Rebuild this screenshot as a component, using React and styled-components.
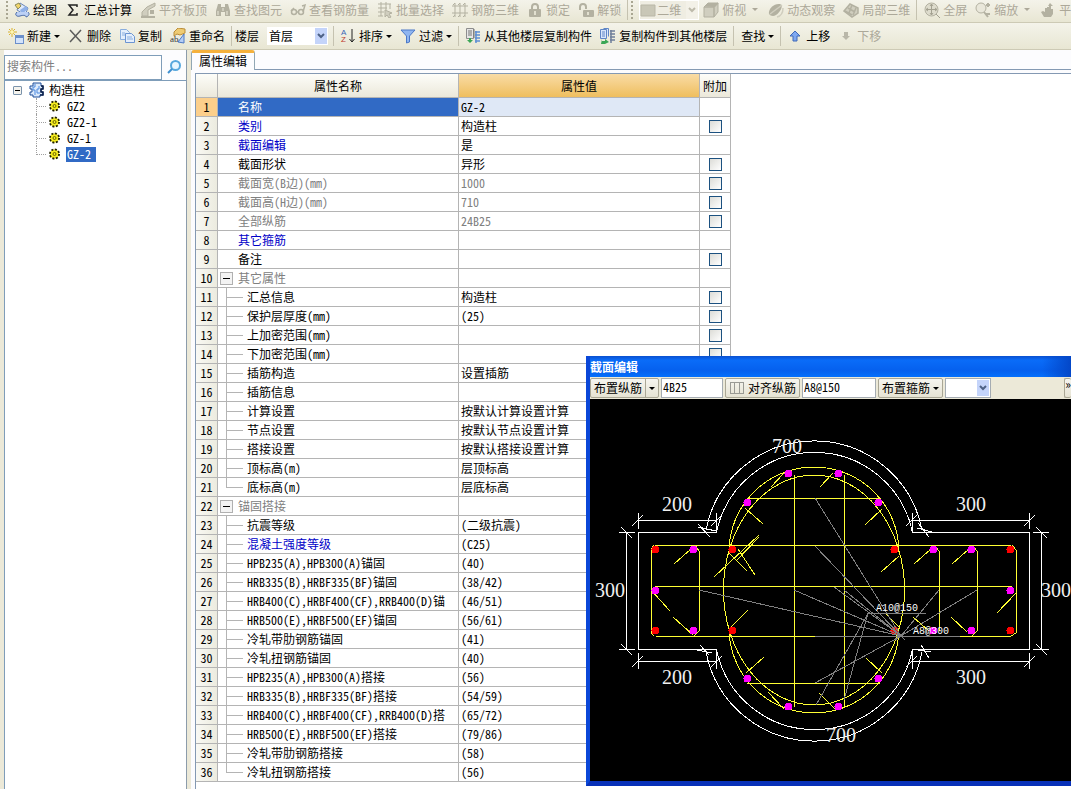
import React from "react";
import styled, { createGlobalStyle, css } from "styled-components";

const GlobalStyle = createGlobalStyle`
   * {
      box-sizing: border-box;
   }
   body {
      margin: 0;
      background: #ffffff;
      color: #000000;
      font-family: "Noto Sans CJK SC", sans-serif;
      font-size: 12px;
      line-height: 18px;
      font-feature-settings: "hwid";
   }
   button, input, select {
      font: inherit;
      font-feature-settings: inherit;
      color: inherit;
   }
`;

const Page = styled.div`
   display: flex;
   flex-direction: column;
   height: 100vh;
   overflow: hidden;
   white-space: nowrap;
`;

/* toolbars */

const Toolbar = styled.div`
   display: flex;
   align-items: center;
   flex: none;
   height: ${(props) => (props.$top ? 23 : 27)}px;
   padding-left: ${(props) => (props.$top ? 6 : 4)}px;
   padding-bottom: ${(props) => (props.$top ? 3 : 0)}px;
   overflow: hidden;
   background: linear-gradient(#f4f3ea, #e8e6d3);
   border-bottom: 1px solid #cdcab5;
`;

const ToolButton = styled.button`
   display: flex;
   align-items: center;
   flex: none;
   gap: 3px;
   height: 20px;
   padding: 0 4px;
   border: 0;
   background: none;
   &:disabled {
      color: #aca899;
   }
   &:hover:enabled {
      background: #f8f7f1;
   }
`;

const Separator = styled.span`
   flex: none;
   width: 1px;
   height: 20px;
   margin: 0 ${(props) => props.$after || 3}px 0 2px;
   background: #c5c2b0;
`;

const Grip = styled.span`
   flex: none;
   width: 2px;
   height: 18px;
   margin-right: ${(props) => props.$after || 2}px;
   background: repeating-linear-gradient(#a9a692 0 2px, transparent 2px 4px);
`;

const Arrow = styled.span`
   flex: none;
   margin: 0 ${(props) => (props.$wide ? 2 : 0)}px 0 ${(props) => (props.$wide ? 3 : 0)}px;
   border: 3px solid transparent;
   border-top-color: currentColor;
   border-bottom: 0;
`;

const FloorLabel = styled.label`
   display: flex;
   align-items: center;
   gap: 8px;
   margin-right: 3px;
   padding-left: 1px;
`;

const Combo = styled.span`
   display: flex;
   align-items: center;
   flex: none;
   width: ${(props) => props.$width}px;
   height: ${(props) => props.$height || 18}px;
   padding: 1px;
   border: ${(props) => (props.$border ? "1px solid #a5acb2" : "0")};
   background: ${(props) => (props.$flat ? "#efede2" : "#ffffff")};
   color: ${(props) => (props.$flat ? "#aca899" : "#000000")};
   outline: ${(props) => (props.$flat ? "1px solid #ffffff" : "none")};
   outline-offset: -1px;
`;

const ComboSelect = styled.select`
   appearance: none;
   flex: 1;
   min-width: 0;
   height: 16px;
   padding: 0 0 0 1px;
   border: 0;
   background: none;
   line-height: 16px;
   opacity: 1;
`;

const ComboArrow = styled.span`
   display: flex;
   align-items: center;
   justify-content: center;
   width: 12px;
   align-self: stretch;
   background: ${(props) => (props.$flat ? "#f3f1e8" : "#c4d4fa")};
   color: ${(props) => (props.$flat ? "#bdbaab" : "#4d6185")};
`;

/* left side */

const Body = styled.div`
   display: flex;
   flex: 1;
   min-height: 0;
   background: #ece9d8;
`;

const Sidebar = styled.aside`
   display: flex;
   flex-direction: column;
   flex: none;
   width: 183px;
   margin-left: 4px;
   border-right: 1px solid #8c9cab;
   background: #fcfcfe;
`;

const SearchRow = styled.form`
   display: flex;
   align-items: center;
   height: 30px;
   padding-top: 4px;
`;

const SearchInput = styled.input`
   width: 158px;
   height: 25px;
   padding: 0 2px 4px;
   border: 1px solid #7f9db9;
   background: #ffffff;
   &::placeholder {
      color: #808080;
      opacity: 1;
   }
`;

const SearchButton = styled.button`
   display: flex;
   justify-content: center;
   flex: 1;
   padding: 0;
   border: 0;
   background: none;
`;

const Tree = styled.ul`
   flex: 1;
   margin: 0;
   padding: 1px 0 0 8px;
   border-top: 1px solid #7f9db9;
   border-left: 1px solid #7f9db9;
   background: #ffffff;
   list-style: none;
   line-height: 16px;
`;

const TreeRoot = styled.div`
   display: flex;
   align-items: center;
   gap: 4px;
   height: 16px;
`;

const TreeToggle = styled.button`
   width: 9px;
   height: 9px;
   margin-right: 3px;
   padding: 0;
   border: 1px solid #7b93ab;
   border-radius: 1px;
   background: linear-gradient(#000000, #000000) center / 5px 1px no-repeat,
      #f4f3ee;
`;

const TreeList = styled.ul`
   margin: 0;
   padding: 0 0 0 23px;
   list-style: none;
`;

const TreeItem = styled.li`
   display: flex;
   align-items: center;
   height: 16px;
`;

const TreeLine = styled.span`
   width: 11px;
   height: ${(props) => (props.$last ? 9 : 16)}px;
   align-self: flex-start;
   border-left: 1px dotted #a0a0a0;
   background: repeating-linear-gradient(90deg, #a0a0a0 0 1px, #ffffff 1px 2px) 0
      8px / 12px 1px no-repeat;
`;

const TreeName = styled.span`
   height: 15px;
   margin-left: 3px;
   padding: 0 5px 0 1px;
   line-height: 14px;
   background: ${(props) => (props.$selected ? "#316ac5" : "none")};
   color: ${(props) => (props.$selected ? "#ffffff" : "#000000")};
`;

/* property table */

const Main = styled.main`
   display: flex;
   flex-direction: column;
   flex: 1;
   min-width: 0;
   margin-left: 4px;
   background: #fcfcfe;
`;

const TabStrip = styled.div`
   display: flex;
   flex: none;
   height: 20px;
   &::after {
      content: "";
      flex: 1;
      border-bottom: 1px solid #8499b3;
   }
`;

const Tab = styled.button`
   height: 20px;
   width: 64px;
   padding: 0 0 4px;
   border: 1px solid #91a7b4;
   border-top: 3px solid #f5b13c;
   border-bottom: 0;
   border-radius: 3px 3px 0 0;
   background: #fcfcfe;
   line-height: 15px;
`;

const TabBody = styled.div`
   flex: 1;
   min-height: 0;
   margin: 3px 0 0 4px;
   border-top: 1px solid #8499b3;
   border-left: 1px solid #8499b3;
   background: #ffffff;
   overflow: hidden;
`;

const Table = styled.table`
   table-layout: fixed;
   width: 535px;
   border-spacing: 0;
   line-height: 18px;
`;

const line = css`
   border-right: 1px solid #b4b4b4;
   border-bottom: 1px solid #b4b4b4;
`;

const HeadCell = styled.th`
   ${line}
   width: ${(props) => props.$width}px;
   height: 24px;
   padding: 0;
   font-weight: normal;
   background: ${(props) =>
      props.$active
         ? "linear-gradient(#f9dca6, #efbe5e)"
         : "linear-gradient(#fdfdf9, #ebe8da)"};
`;

const NumberCell = styled.th`
   ${line}
   height: 19px;
   padding: 0;
   font-weight: normal;
   background: ${(props) =>
      props.$active
         ? "#fccf8b"
         : "linear-gradient(90deg, #f9f9f4, #ecebdf)"};
`;

const tones = { blue: "#0000c8", gray: "#808080" };

const NameCell = styled.td`
   ${line}
   height: 19px;
   padding: 0 0 0 ${(props) => ({ group: 2, child: 8 }[props.$kind] || 20)}px;
   overflow: hidden;
   color: ${(props) => (props.$active ? "#ffffff" : tones[props.$tone])};
   background: ${(props) => (props.$active ? "#316ac5" : "#ffffff")};
`;

const NameFlow = styled.div`
   display: flex;
   align-items: center;
   height: 18px;
`;

const GroupToggle = styled.button`
   width: 13px;
   height: 13px;
   margin-right: 5px;
   padding: 0;
   border: 1px solid #b0b0b0;
   background: linear-gradient(#000000, #000000) center / 7px 1px no-repeat,
      #f3f3f3;
`;

const Branch = styled.span`
   width: 17px;
   height: 19px;
   margin: 0 4px -1px 0;
   background: linear-gradient(#b4b4b4, #b4b4b4) 0 0 / 1px
         ${(props) => (props.$last ? "9px" : "19px")} no-repeat,
      linear-gradient(#b4b4b4, #b4b4b4) 0 9px / 17px 1px no-repeat;
`;

const ValueCell = styled.td`
   ${line}
   height: 19px;
   padding: 0 0 0 2px;
   overflow: hidden;
   color: ${(props) => tones[props.$tone]};
   background: ${(props) => (props.$active ? "#dfe8f6" : "#ffffff")};
`;

const CheckCell = styled.td`
   ${line}
   height: 19px;
   padding: 0;
`;

const CheckBox = styled.input`
   appearance: none;
   display: block;
   width: 13px;
   height: 13px;
   margin: 0 auto;
   border: 1px solid #1c5180;
   background: linear-gradient(135deg, #dcdcd7, #ffffff);
   &:checked {
      background: #21a121;
   }
`;

/* section editor */

const Window = styled.section`
   position: absolute;
   left: 586px;
   right: 0;
   top: 356px;
   display: flex;
   flex-direction: column;
   overflow: hidden;
   border-left: 4px solid #0a47d8;
   border-bottom: 5px solid #0831b8;
   background: #000000;
   line-height: 18px;
`;

const TitleBar = styled.h2`
   height: 21px;
   margin: 0;
   font-size: 12px;
   line-height: 22px;
   color: #ffffff;
   background: linear-gradient(90deg, transparent 94%, #0347c8),
      linear-gradient(#0a50d0, #0a6cf8 20%, #0560ee 70%, #0470fc);
`;

const WindowBar = styled.div`
   display: flex;
   align-items: center;
   gap: 2px;
   height: 22px;
   background: #ece9d8;
`;

const WindowButton = styled.button`
   display: flex;
   align-items: center;
   flex: none;
   gap: 3px;
   height: 20px;
   padding: 0 3px;
   border: 1px solid #aaa795;
   border-radius: 2px;
   background: linear-gradient(#f6f5ef, #e6e3d3);
`;

const Divider = styled.span`
   width: 1px;
   height: 18px;
   background: #aaa795;
`;

const WindowInput = styled.input`
   flex: none;
   width: ${(props) => props.$width}px;
   height: 20px;
   padding: 0 1px 3px;
   border: 1px solid #a5acb2;
   background: #ffffff;
`;

const More = styled(WindowButton)`
   margin-left: auto;
   padding: 0 0 8px;
   border-right: 0;
   line-height: 12px;
`;

const Canvas = styled.svg`
   display: block;
   width: 481px;
   height: 382px;
   fill: none;
   shape-rendering: crispEdges;
`;

const Dimension = styled.text`
   font-family: "Liberation Serif", serif;
   font-size: 20px;
   fill: #f0f0f0;
`;

const Note = styled.text`
   font-family: "Liberation Mono", monospace;
   font-size: 10px;
   fill: #ffffff;
`;

const Glyph = styled.svg`
   display: block;
   flex: none;
   width: 16px;
   height: 16px;
   fill: none;
`;

const G = "#b3b1a1";
const L = "#d0cebf";

const drawings = {
   draw: (
      <>
         <path d="M6 1l8 5-3 7-8-5z" fill="#dfe9fa" stroke="#6a86b8" />
         <path d="M1 3l4-2 2 3-3 3z" fill="#f2d56a" stroke="#8b8a5a" />
         <path d="M6 8l6-4 2 3-6 5z" fill="#8fb0e8" />
         <path d="M3 10c-3 3 0 5 3 4s6-1 6 1c3-1 4-3 2-5" stroke="#4a6aa5" fill="#bcd0f5" />
      </>
   ),
   sum: <path d="M12 5V3H4l4 5-4 5h8v-2" stroke="#222222" strokeWidth="1.5" />,
   slab: (
      <>
         <path d="M2 10l5-5 8-4v3L8 8v6H2z" fill={L} stroke={G} />
         <path d="M1 14h14v2H1zM10 8h4v4h-4z" fill={G} />
      </>
   ),
   find: (
      <>
         <path d="M3 2h3v3h4V2h3l2 7v5h-5v-4H6v4H1V9z" fill={G} />
         <path d="M3 9v4M12 9v4M8 6v3" stroke="#ecebdc" />
      </>
   ),
   glasses: (
      <>
         <circle cx="4" cy="10" r="2.5" stroke={G} strokeWidth="1.5" />
         <circle cx="11" cy="10" r="2.5" stroke={G} strokeWidth="1.5" />
         <path d="M1 9l3-3M6 10h3M13 10l2-7-3 1" stroke={G} strokeWidth="1.5" />
      </>
   ),
   batch: (
      <>
         <path d="M1 2h13M1 6h9M1 10h6M4 0v14M9 0v8M13 2v5M1 14h5" stroke={G} />
         <path d="M8 8l7 3-3 1 2 3-2 1-2-3-2 2z" fill={L} stroke={G} />
      </>
   ),
   mesh: (
      <path d="M0 4h16M0 11h16M3 1v14M8 1v14M13 1v14M1 3l2-2M6 3l2-2M11 3l2-2M1 15l2-2M6 15l2-2M11 15l2-2" stroke={G} />
   ),
   lock: (
      <>
         <path d="M5 7V5a3 3 0 016 0v2" stroke={G} strokeWidth="2" />
         <rect x="2" y="7" width="12" height="8" rx="1" fill={G} />
         <path d="M8 9v4" stroke="#e2e0d0" strokeWidth="2" />
      </>
   ),
   unlock: (
      <>
         <path d="M2 8V5a3 3 0 016 0v2" stroke={G} strokeWidth="2" />
         <rect x="5" y="8" width="11" height="7" rx="1" fill={G} />
         <path d="M10 10v3" stroke="#e2e0d0" strokeWidth="2" />
      </>
   ),
   plane: <path d="M1 3h14v11H1z" fill="#c9c7b7" stroke="#b9b7a7" />,
   cube: (
      <>
         <path d="M1 5l4-4h10v9l-4 5H1z" fill={L} stroke={G} />
         <path d="M1 5h10v10M11 5l4-4" stroke={G} strokeWidth="1.5" />
         <path d="M2 4l3-3h10l-4 4z" fill={G} />
      </>
   ),
   orbit: (
      <>
         <path d="M1 12C0 7 6 1 12 2c5 2-2 12-7 12-2 0-3-1-4-2z" fill={G} />
         <path d="M2 12l12-9M9 15c4-1 6-5 6-9" stroke={L} strokeWidth="1.5" />
      </>
   ),
   local: (
      <>
         <path d="M1 9l6-7 8 4v5l-6 4z" fill={L} stroke={G} strokeWidth="1.5" />
         <path d="M5 6l7 4M9 3L6 11M13 6l-3 7M2 9l7 4" stroke={G} strokeWidth="1.5" />
      </>
   ),
   full: (
      <>
         <circle cx="7.500" cy="7.500" r="6.500" fill="#dedccd" stroke={G} />
         <path d="M7.500 2v11M2 7.500h11M6 4l1.500-2L9 4M6 11l1.500 2L9 11M4 6L2 7.500 4 9M11 6l2 1.500L11 9M12 12l4 4" stroke="#a3a191" />
      </>
   ),
   zoom: (
      <>
         <circle cx="6" cy="6" r="5" fill="#e9e7da" stroke={G} />
         <path d="M9 10l4 5M11 3h4M13 1v4M11 12h4" stroke={G} strokeWidth="2" />
      </>
   ),
   pan: (
      <path d="M4 15l-3-5 2-1 2 1V6h2V5h2v1h2v1h2v5l-2 3zM8 4l2-3 3 3h-2v3H9V4z" fill={G} />
   ),
   create: (
      <>
         <path d="M4 0v9M0 4h9M1 1l6 6M7 1L1 7" stroke="#d9b22e" />
         <rect x="2.500" y="2.500" width="3" height="3" fill="#fff6b0" />
         <rect x="7.500" y="7.500" width="8" height="8" fill="#d3e3fb" stroke="#6b8fcb" />
         <path d="M8 9h7" stroke="#6b8fcb" strokeWidth="2" />
      </>
   ),
   remove: <path d="M2 2l11 12M13 2L2 14" stroke="#5b5b5b" strokeWidth="1.5" />,
   copy: (
      <>
         <path d="M1.500 1.500h6l3 3v7h-9z" fill="#e4eefc" stroke="#8aaede" />
         <path d="M6.500 5.500h6l3 3v6h-9z" fill="#e4eefc" stroke="#6b94d2" />
         <path d="M8 9h5M8 11h6M3 5h3M3 7h3" stroke="#8aaede" />
      </>
   ),
   rename: (
      <>
         <path d="M4 4l4-4 7 1v4l-5 2-3-1-3 2z" fill="#efcb72" stroke="#b98c3a" />
         <path d="M8 14l6-8v9z" fill="#b5cdf5" stroke="#4c78c4" />
         <text x="0" y="14" fontSize="9" fill="#333333" fontFamily="Liberation Serif, serif">ab</text>
      </>
   ),
   sort: (
      <>
         <text x="1" y="7" fontSize="8" fill="#3c66b5" fontFamily="Liberation Sans, sans-serif">A</text>
         <text x="1" y="14" fontSize="8" fill="#c0392b" fontFamily="Liberation Sans, sans-serif">Z</text>
         <path d="M12 1v13M9.500 11l2.500 3 2.500-3" stroke="#222222" />
      </>
   ),
   filter: <path d="M1 2h14L9.500 8v6l-3 1V8z" fill="#8fb5f0" stroke="#4a78c8" />,
   copyFrom: (
      <>
         <path d="M1.500 .5h7v10h-7z" fill="#e6e6e6" stroke="#8d8d8d" />
         <path d="M3 3h4M3 5h4M3 7h4M9 1v9" stroke="#777777" />
         <path d="M10 4h5M10 7h5M10 10h5M10 13h5M11 3v12" stroke="#5d8fd4" strokeWidth="1.500" />
         <path d="M5 15l-3-3h2v-2h2v2h2z" fill="#3aa655" />
      </>
   ),
   copyTo: (
      <>
         <path d="M.5 1.500h6v9h-6zM3.500 .5h5v8" fill="#d7e5fb" stroke="#5f86c6" />
         <path d="M2 4h3M2 6h3M2 8h3" stroke="#5f86c6" />
         <path d="M10 3h5M10 6h5M10 9h5M10 12h5M11 2v13" stroke="#6f7f9a" strokeWidth="1.500" />
         <path d="M2 11v2h3v-2l4 3-4 2H1z" fill="#3aa655" />
      </>
   ),
   up: <path d="M8 3l5 5h-3v5H6V8H3z" fill="#7fa8f0" stroke="#3f69b8" />,
   down: <path d="M8 12L4 8h2V4h4v4h2z" fill="#b9b7a9" />,
   search: (
      <>
         <circle cx="9.500" cy="6.500" r="4.500" stroke="#58a8dd" strokeWidth="2" fill="#e8f6ff" />
         <path d="M6 10l-4 4" stroke="#3d8fd0" strokeWidth="2" />
      </>
   ),
   column: (
      <>
         <path d="M4 1h8v3h2v3h-2v3h2v3h-3v2H4v-2H1v-3h2V7H1V4h3z" fill="#dceafb" stroke="#1f4f9a" />
         <path d="M6 2v3H4v3h2v5M10 4v3H8v4h3" stroke="#4d8ae0" />
         <path d="M12 4h2v3h-2v3h2v3h-3" stroke="#0b1f48" strokeWidth="1.500" />
      </>
   ),
   gear: (
      <>
         <circle cx="7.500" cy="8" r="4.500" fill="#f5ec1e" stroke="#222200" strokeWidth="2" strokeDasharray="2 1.500" />
         <circle cx="7.500" cy="8" r="3.500" fill="#f5ec1e" />
         <circle cx="7.500" cy="8" r="1.500" stroke="#6b6500" />
      </>
   ),
   align: <path d="M1.500 2v12M5.500 2v12M10.500 2v12M14.500 2v12M1 2.500h4M6 2.500h9M1 13.500h4M6 13.500h9" stroke="#9a9a94" />,
};

const Icon = ({ name }) => (
   <Glyph viewBox='0 0 16 16' aria-hidden='true'>
      {drawings[name]}
   </Glyph>
);

const Tool = ({ icon, children, arrow, wide, disabled }) => (
   <ToolButton type='button' disabled={disabled}>
      {icon && <Icon name={icon} />}
      {children}
      {arrow && <Arrow $wide={wide} />}
   </ToolButton>
);

const ComboBox = ({ id, label, options, width, height, flat, border, icon }) => (
   <Combo $width={width} $height={height} $flat={flat} $border={border}>
      {icon && <Icon name={icon} />}
      <ComboSelect id={id} aria-label={label} disabled={flat}>
         {options.map((option) => (
            <option key={option}>{option}</option>
         ))}
      </ComboSelect>
      <ComboArrow $flat={flat}>
         <svg width='8' height='6' viewBox='0 0 8 6' fill='none'>
            <path d='M1 1l3 3 3-3' stroke='currentColor' strokeWidth='2' />
         </svg>
      </ComboArrow>
   </Combo>
);

const rows = [
   { name: "名称", value: "GZ-2", active: true },
   { name: "类别", value: "构造柱", tone: "blue", check: true },
   { name: "截面编辑", value: "是", tone: "blue" },
   { name: "截面形状", value: "异形", check: true },
   { name: "截面宽(B边)(mm)", value: "1000", tone: "gray", check: true },
   { name: "截面高(H边)(mm)", value: "710", tone: "gray", check: true },
   { name: "全部纵筋", value: "24B25", tone: "gray", check: true },
   { name: "其它箍筋", tone: "blue" },
   { name: "备注", check: true },
   { name: "其它属性", tone: "gray", kind: "group" },
   { name: "汇总信息", value: "构造柱", kind: "child", check: true },
   { name: "保护层厚度(mm)", value: "(25)", kind: "child", check: true },
   { name: "上加密范围(mm)", kind: "child", check: true },
   { name: "下加密范围(mm)", kind: "child", check: true },
   { name: "插筋构造", value: "设置插筋", kind: "child" },
   { name: "插筋信息", kind: "child" },
   { name: "计算设置", value: "按默认计算设置计算", kind: "child" },
   { name: "节点设置", value: "按默认节点设置计算", kind: "child" },
   { name: "搭接设置", value: "按默认搭接设置计算", kind: "child" },
   { name: "顶标高(m)", value: "层顶标高", kind: "child" },
   { name: "底标高(m)", value: "层底标高", kind: "child", last: true },
   { name: "锚固搭接", tone: "gray", kind: "group" },
   { name: "抗震等级", value: "(二级抗震)", kind: "child" },
   { name: "混凝土强度等级", value: "(C25)", tone: "blue", kind: "child" },
   { name: "HPB235(A),HPB300(A)锚固", value: "(40)", kind: "child" },
   { name: "HRB335(B),HRBF335(BF)锚固", value: "(38/42)", kind: "child" },
   { name: "HRB400(C),HRBF400(CF),RRB400(D)锚", value: "(46/51)", kind: "child" },
   { name: "HRB500(E),HRBF500(EF)锚固", value: "(56/61)", kind: "child" },
   { name: "冷轧带肋钢筋锚固", value: "(41)", kind: "child" },
   { name: "冷轧扭钢筋锚固", value: "(40)", kind: "child" },
   { name: "HPB235(A),HPB300(A)搭接", value: "(56)", kind: "child" },
   { name: "HRB335(B),HRBF335(BF)搭接", value: "(54/59)", kind: "child" },
   { name: "HRB400(C),HRBF400(CF),RRB400(D)搭", value: "(65/72)", kind: "child" },
   { name: "HRB500(E),HRBF500(EF)搭接", value: "(79/86)", kind: "child" },
   { name: "冷轧带肋钢筋搭接", value: "(58)", kind: "child" },
   { name: "冷轧扭钢筋搭接", value: "(56)", kind: "child", last: true },
];

const PropertyRow = ({ row, index }) => (
   <tr>
      <NumberCell scope='row' $active={row.active}>
         {index + 1}
      </NumberCell>
      <NameCell $kind={row.kind} $tone={row.tone} $active={row.active}>
         <NameFlow>
            {row.kind === "group" && (
               <GroupToggle type='button' aria-label={row.name} />
            )}
            {row.kind === "child" && <Branch $last={row.last} />}
            {row.name}
         </NameFlow>
      </NameCell>
      <ValueCell
         $active={row.active}
         $tone={row.tone === "gray" ? "gray" : undefined}
      >
         {row.value}
      </ValueCell>
      <CheckCell>
         {row.check && <CheckBox type='checkbox' aria-label={row.name} />}
      </CheckCell>
   </tr>
);

const redBars = [
   [655, 549], [732, 549], [894, 549], [1010, 549],
   [655, 630], [732, 630], [894, 630], [1010, 630],
];

const magentaBars = [
   [693, 549], [933, 549], [971, 549], [655, 590], [1010, 590],
   [693, 630], [933, 630], [971, 630], [747, 502], [878, 502],
   [747, 678], [878, 678], [788, 473], [838, 473], [788, 706], [838, 706],
];

const dimensions = [
   [772, 453, "700"], [662, 511, "200"], [956, 511, "300"],
   [595, 597, "300"], [1041, 597, "300"], [662, 684, "200"],
   [956, 684, "300"], [826, 742, "700"],
];

const SectionDrawing = () => (
   <Canvas viewBox='590 399 481 382' role='img' aria-label='截面'>
      <g stroke='#ffffff'>
         <path d='M716.500 532.500H638.500V649.500H716.500A100 100 0 0 0 912.500 649.500H1029.500V532.500H912.500A100 100 0 0 0 716.500 532.500' />
         <path d='M706 530A110 110 0 0 1 922 530M706 652A110 110 0 0 0 922 652' />
         <path d='M638 520.500H716M912 520.500H1029M638 661.500H716M912 661.500H1029' />
         <path d='M638.500 513V529M716.500 513V532M912.500 513V532M1029.500 513V529M638.500 653V669M716.500 650V669M912.500 650V669M1029.500 653V669' />
         <path d='M632 526l11-11M711 526l11-11M906 526l11-11M1024 526l11-11M632 667l11-11M711 667l11-11M906 667l11-11M1024 667l11-11' />
         <path d='M626.500 532V649M1041.500 532V649M619 532.500h16M619 649.500h16M1033 532.500h16M1033 649.500h16' />
         <path d='M621 527l11 11M621 644l11 11M1036 527l11 11M1036 644l11 11' />
         <path d='M698 524l12 13M698 527l18 4M917 528l15 4M918 523l11 14M700 645l9 10M697 650l15 3M912 649l19 3M921 645l8 13' />
      </g>
      <g stroke='#ffff33'>
         <path d='M655 545.500H1011M655 586.500H1012M656 636.500H815M960 636.500H1011' />
         <path d='M651.500 550V633M699.500 551V631M939.500 551V631M977.500 551V631M1016.500 550V633' />
         <path d='M794.500 475V707M844.500 475V707M747 498.500H880M747 683.500H880' />
         <path d='M651 550l3-5M651 633l3 3M699 551l-4-6M699 631l-5 5M939 551l-4-5M977 551l-4-5M977 631l-5 5M1016 550l-4-5M1016 633l-5 3' />
         <ellipse cx='814' cy='590' rx='90.500' ry='115' />
         <path d='M729 552A85 85 0 0 1 899 552M729 628A85 85 0 0 0 899 628' />
         <path d='M674 564l17-15M745 508l18 16M714 577l45-42M737 560l22-23M738 549l17 26M728 552l19 19M771 487l13-14M820 487l13-14' />
         <path d='M882 509l-17 16M899 556l-18 16M914 564l17-15M952 564l17-15M1016 593l-19 20M651 590l19 21M673 617l20 18' />
         <path d='M730 628l18-18M746 673l18-16M768 692l16 17M819 693l16 16M866 658l16 15M885 613l15 15M913 617l16 14M951 617l16 15' />
      </g>
      {redBars.map(([x, y]) => (
         <circle key={`${x}-${y}`} cx={x + 0.5} cy={y + 0.5} r='4' fill='#ff0000' />
      ))}
      {magentaBars.map(([x, y]) => (
         <circle key={`${x}-${y}`} cx={x + 0.5} cy={y + 0.5} r='4' fill='#ff00ff' />
      ))}
      <g stroke='#808080'>
         <path d='M815 498L901 636L815 546M834 587L901 636L794 590M699 590L901 636L844 590M939 590L901 636L977 590M815 683L901 636M815 636.500H960' />
         <path d='M926 613.500H868L816 705M868 613L844 700M896 631l9 9M896 640l9-8' />
      </g>
      {dimensions.map(([x, y, text]) => (
         <Dimension key={`${x}-${y}`} x={x} y={y}>
            {text}
         </Dimension>
      ))}
      <Note x='876' y='611'>A10@150</Note>
      <Note x='913' y='634'>A8@300</Note>
   </Canvas>
);

const SectionEditor = () => (
   <Window>
      <TitleBar>截面编辑</TitleBar>
      <WindowBar>
         <WindowButton type='button'>
            布置纵筋
            <Divider />
            <Arrow />
         </WindowButton>
         <WindowInput $width={62} aria-label='纵筋' defaultValue='4B25' />
         <WindowButton type='button'>
            <Icon name='align' />
            对齐纵筋
         </WindowButton>
         <WindowInput $width={74} aria-label='箍筋' defaultValue='A8@150' />
         <WindowButton type='button'>
            布置箍筋
            <Arrow />
         </WindowButton>
         <ComboBox label='箍筋类型' options={[""]} width={46} height={20} border />
         <More type='button' aria-label='更多'>
            »
         </More>
      </WindowBar>
      <SectionDrawing />
   </Window>
);

const components = ["GZ2", "GZ2-1", "GZ-1", "GZ-2"];

const App = () => (
   <Page>
      <GlobalStyle />
      <Toolbar $top>
         <Grip />
         <Tool icon='draw'>绘图</Tool>
         <Tool icon='sum'>汇总计算</Tool>
         <Tool icon='slab' disabled>平齐板顶</Tool>
         <Tool icon='find' disabled>查找图元</Tool>
         <Tool icon='glasses' disabled>查看钢筋量</Tool>
         <Tool icon='batch' disabled>批量选择</Tool>
         <Tool icon='mesh' disabled>钢筋三维</Tool>
         <Tool icon='lock' disabled>锁定</Tool>
         <Tool icon='unlock' disabled>解锁</Tool>
         <Separator />
         <Grip $after={6} />
         <ComboBox label='视图' options={["二维"]} width={60} height={20} icon='plane' flat />
         <Tool icon='cube' arrow wide disabled>俯视</Tool>
         <Tool icon='orbit' disabled>动态观察</Tool>
         <Tool icon='local' disabled>局部三维</Tool>
         <Separator />
         <Tool icon='full' disabled>全屏</Tool>
         <Tool icon='zoom' arrow wide disabled>缩放</Tool>
         <Tool icon='pan' disabled>平</Tool>
      </Toolbar>
      <Toolbar>
         <Tool icon='create' arrow>新建</Tool>
         <Tool icon='remove'>删除</Tool>
         <Tool icon='copy'>复制</Tool>
         <Tool icon='rename'>重命名</Tool>
         <Separator $after={2} />
         <FloorLabel>
            楼层
            <ComboBox id='floor' label='楼层' options={["首层"]} width={61} />
         </FloorLabel>
         <Separator $after={2} />
         <Tool icon='sort' arrow>排序</Tool>
         <Tool icon='filter' arrow>过滤</Tool>
         <Separator $after={2} />
         <Tool icon='copyFrom'>从其他楼层复制构件</Tool>
         <Tool icon='copyTo'>复制构件到其他楼层</Tool>
         <Separator />
         <Tool arrow>查找</Tool>
         <Separator $after={2} />
         <Tool icon='up'>上移</Tool>
         <Tool icon='down' disabled>下移</Tool>
      </Toolbar>
      <Body>
         <Sidebar>
            <SearchRow>
               <SearchInput aria-label='搜索构件' placeholder='搜索构件...' />
               <SearchButton type='button' aria-label='搜索'>
                  <Icon name='search' />
               </SearchButton>
            </SearchRow>
            <Tree>
               <li>
                  <TreeRoot>
                     <TreeToggle type='button' aria-label='构造柱' />
                     <Icon name='column' />
                     构造柱
                  </TreeRoot>
                  <TreeList>
                     {components.map((name, index) => (
                        <TreeItem key={name}>
                           <TreeLine $last={index === components.length - 1} />
                           <Icon name='gear' />
                           <TreeName $selected={name === "GZ-2"}>{name}</TreeName>
                        </TreeItem>
                     ))}
                  </TreeList>
               </li>
            </Tree>
         </Sidebar>
         <Main>
            <TabStrip>
               <Tab type='button'>属性编辑</Tab>
            </TabStrip>
            <TabBody>
               <Table>
                  <thead>
                     <tr>
                        <HeadCell $width={22} />
                        <HeadCell $width={241}>属性名称</HeadCell>
                        <HeadCell $width={241} $active>属性值</HeadCell>
                        <HeadCell $width={31}>附加</HeadCell>
                     </tr>
                  </thead>
                  <tbody>
                     {rows.map((row, index) => (
                        <PropertyRow key={row.name} row={row} index={index} />
                     ))}
                  </tbody>
               </Table>
            </TabBody>
         </Main>
      </Body>
      <SectionEditor />
   </Page>
);

export default App;
